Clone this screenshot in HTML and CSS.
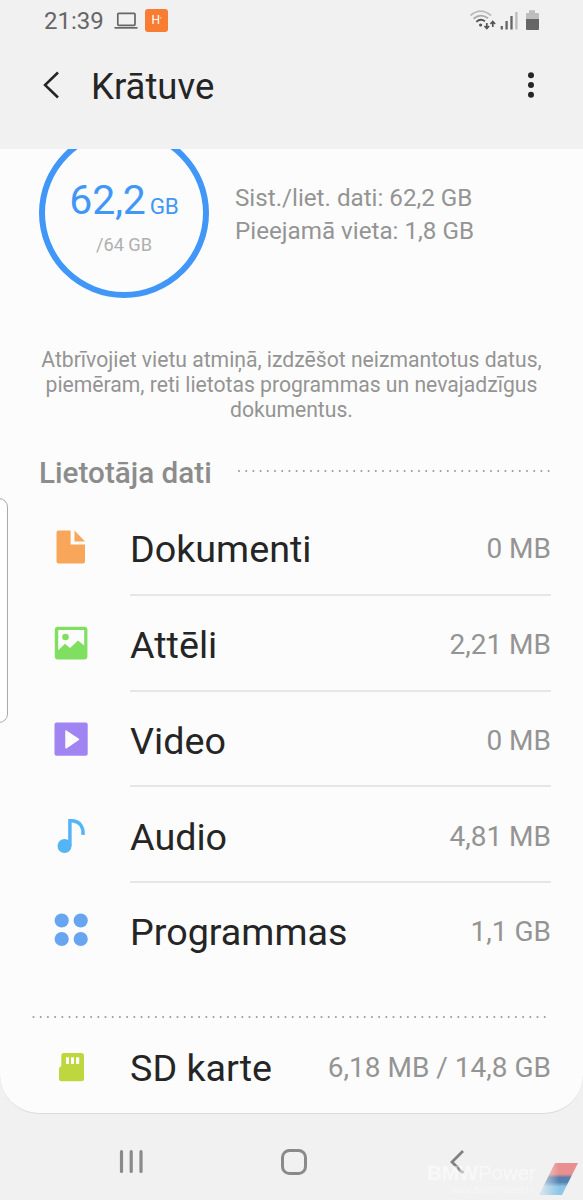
FILE: index.html
```html
<!DOCTYPE html>
<html lang="lv">
<head>
<meta charset="utf-8">
<title>Krātuve</title>
<link rel="stylesheet" href="styles.css">
</head>
<body>
<div class="screen">
  <div class="statusbar">
    <span class="time">21:39</span>
    <svg class="laptop" width="24" height="18" viewBox="0 0 24 18"><rect x="3.8" y="1.3" width="17.2" height="12" rx="1" fill="none" stroke="#666" stroke-width="1.7"/><path d="M.5 15H23.5V16.7H.5Z" fill="#666"/></svg>
    <span class="app">H<i>'</i></span>
    <svg class="signals" width="72" height="24" viewBox="468 8 72 24">
      <g fill="none" stroke-width="1.8">
        <path d="M470.5 15.5Q480.5 6.8 491 15.5" stroke="#bbb"/>
        <path d="M473.5 18.8Q480.5 12.8 488 18.3" stroke="#aaa"/>
        <path d="M476.3 21.8Q480.5 18 485 21.2" stroke="#555"/>
      </g>
      <circle cx="480.6" cy="25" r="1.6" fill="#555"/>
      <path d="M486.8 23V28M484.5 26L486.8 28.5 489.1 26M492.8 27V22M490.5 24L492.8 21.5 495.1 24" fill="none" stroke="#555" stroke-width="1.7"/>
      <path d="M501.8 29.5V26M506.6 29.5V21M511.5 29.5V16" stroke="#666" stroke-width="2.3"/>
      <path d="M516.4 29.5V12" stroke="#bbb" stroke-width="2.3"/>
      <path d="M526 19V14Q526 13 527 13H529V10.2H535V13H538Q539 13 539 14V19Z" fill="#bdbdbd"/>
      <path d="M526 19H539V29Q539 30 538 30H527Q526 30 526 29Z" fill="#666"/>
    </svg>
  </div>
  <header class="appbar">
    <svg width="18" height="28" viewBox="0 0 18 28"><path d="M16 1.5 3 14 16 26.5" fill="none" stroke="#252525" stroke-width="2.5"/></svg>
    <h1>Krātuve</h1>
    <svg class="more" width="8" height="28" viewBox="0 0 8 28" fill="#252525"><circle cx="4" cy="4.2" r="3"/><circle cx="4" cy="14" r="3"/><circle cx="4" cy="23.8" r="3"/></svg>
  </header>
  <main class="card">
    <section class="summary">
      <div class="ring">
        <div class="used">62,2<small>GB</small></div>
        <div class="total">/64 GB</div>
      </div>
      <div class="facts">Sist./liet. dati: 62,2 GB<br>Pieejamā vieta: 1,8 GB</div>
    </section>
    <p class="hint">Atbrīvojiet vietu atmiņā, izdzēšot neizmantotus datus,<br>piemēram, reti lietotas programmas un nevajadzīgus<br>dokumentus.</p>
    <div class="heading">
      <h2>Lietotāja dati</h2>
      <svg class="dots" width="316" height="4"><path d="M2 2H315" /></svg>
    </div>
    <div class="row">
      <svg class="icon" width="34" height="34" viewBox="0 0 34 34" fill="#f8a659"><path d="M4.5.5H16.6V14.5H31V31.5Q31 33.5 29 33.5H4.5Q2.5 33.5 2.5 31.5V2.5Q2.5.5 4.5.5Z"/><path d="M20.5.5 31 11.5H20.5Z"/></svg>
      <div class="line"><span>Dokumenti</span><b>0 MB</b></div>
    </div>
    <div class="row">
      <svg class="icon" width="34" height="34" viewBox="0 0 34 34"><rect x=".8" y=".8" width="32.6" height="32.6" rx="3" fill="#80df60"/><path d="M4.2 4H30.2V19.5L24 14.5 16 22 11 17.8 4.2 24.2Z" fill="#fcfcfc"/><circle cx="11.5" cy="11" r="3.3" fill="#80df60"/></svg>
      <div class="line"><span>Attēli</span><b>2,21 MB</b></div>
    </div>
    <div class="row">
      <svg class="icon" width="34" height="34" viewBox="0 0 34 34"><rect x=".5" y=".5" width="33.2" height="33.2" rx="2" fill="#a084f2"/><path d="M12 9 24.5 17.3 12 25.8Z" fill="#fcfcfc" stroke="#fcfcfc" stroke-width="1.5" stroke-linejoin="round"/></svg>
      <div class="line"><span>Video</span><b>0 MB</b></div>
    </div>
    <div class="row">
      <svg class="icon" width="34" height="36" viewBox="0 0 34 36"><circle cx="10.5" cy="28" r="7" fill="#54b4f5"/><path d="M15.9 28V2.8H18.5C26 3.6 29.6 9 29 16.8" fill="none" stroke="#54b4f5" stroke-width="3.5"/></svg>
      <div class="line"><span>Audio</span><b>4,81 MB</b></div>
    </div>
    <div class="row">
      <svg class="icon" width="34" height="34" viewBox="0 0 34 34" fill="#68a5f0"><circle cx="7.7" cy="7.5" r="7.1"/><circle cx="26.7" cy="7.5" r="7.1"/><circle cx="7.7" cy="26" r="7.1"/><circle cx="26.7" cy="26" r="7.1"/></svg>
      <div class="line last"><span>Programmas</span><b>1,1 GB</b></div>
    </div>
    <svg class="dots wide" width="520" height="4"><path d="M2.5 2H519"/></svg>
    <div class="row sd">
      <svg class="icon" width="34" height="34" viewBox="0 0 34 34"><path d="M9.5 3H27.5Q30 3 30 5.5V29Q30 31.3 27.5 31.3H7.5Q5 31.3 5 29V19Q5 17.3 7.3 16V5.5Q7.3 3 9.5 3Z" fill="#bed73e"/><path d="M12 7.3H15V14H12ZM17 7.3H20V14H17ZM22 7.3H25.2V14H22Z" fill="#fcfcfc"/></svg>
      <div class="line last"><span>SD karte</span><b>6,18 MB / 14,8 GB</b></div>
    </div>
  </main>
  <nav class="navbar">
    <svg width="24" height="26" viewBox="0 0 24 26"><path d="M2.5 2.5V22.5M12.2 2.5V22.5M22 2.5V22.5" stroke="#8a8a8a" stroke-width="3.2" stroke-linecap="round"/></svg>
    <svg width="28" height="28" viewBox="0 0 28 28"><rect x="2.5" y="2.5" width="23" height="23" rx="7" fill="none" stroke="#8a8a8a" stroke-width="3"/></svg>
    <svg width="16" height="26" viewBox="0 0 16 26"><path d="M14 2 3 13 14 24" fill="none" stroke="#808080" stroke-width="2.8"/></svg>
  </nav>
  <div class="edge-handle"></div>
  <div class="watermark">
    <div class="brand"><b>BMW</b>Power</div>
    <div class="site">www.BMWPower.lv</div>
  </div>
  <svg class="flag" width="42" height="34" viewBox="0 0 42 34">
    <defs>
      <linearGradient id="fade" x1="0" x2="1"><stop offset="0" stop-color="#fff" stop-opacity=".15"/><stop offset=".5" stop-color="#fff"/></linearGradient>
      <linearGradient id="stripes" x1="0" y1="0" x2="0" y2="1"><stop offset=".35" stop-color="#e88f8f"/><stop offset=".45" stop-color="#5a7dab"/><stop offset=".6" stop-color="#5585b3"/><stop offset=".74" stop-color="#8dc6e6"/></linearGradient>
      <mask id="m"><rect width="42" height="34" fill="url(#fade)"/></mask>
    </defs>
    <path mask="url(#m)" d="M17 1H40L24 33H1Z" fill="url(#stripes)"/>
  </svg>
</div>
</body>
</html>
```

FILE: styles.css
```css
* { box-sizing: border-box; }
body { margin: 0; background: #f1f1f1; font-family: Roboto, sans-serif; }
svg { display: block; flex: none; }
.screen { position: relative; width: 583px; height: 1200px; overflow: hidden; display: flex; flex-direction: column; }
.statusbar { height: 42px; flex: none; display: flex; align-items: center; padding: 0 43px 0 44px; }
.time { font-size: 24px; line-height: 42px; color: #666; width: 70px; }
.app { margin-left: 7px; margin-top: -2px; width: 23px; height: 23px; border-radius: 3px; background: #f87c31; color: #fff; font-size: 12px; line-height: 23px; text-align: center; }
.app i { font-size: 7px; font-style: normal; vertical-align: 2px; }
.signals { margin-left: auto; margin-top: -2px; }
.appbar { height: 107px; flex: none; display: flex; align-items: center; padding: 0 48px 22px 42px; }
.appbar h1 { margin: 5px 0 0 31px; font-size: 36.5px; font-weight: 400; line-height: 44px; color: #252525; }
.more { margin-left: auto; }
.card { height: 965px; flex: none; overflow: hidden; background: #fcfcfc; border-bottom: 1px solid #dcdcdc; border-radius: 0 0 39px 39px; }
.summary { height: 149px; display: flex; padding-left: 39px; }
.ring { width: 170px; height: 170px; margin-top: -21px; border: 6.5px solid #4197f8; border-radius: 50%; text-align: center; padding-top: 42px; flex: none; }
.used { font-size: 41px; line-height: 48px; color: #4197f8; white-space: nowrap; letter-spacing: -.2px; }
.used small { font-size: 22.5px; margin-left: 4px; }
.total { margin-top: 4px; font-size: 18.2px; line-height: 22px; color: #b0b0b0; }
.facts { margin: 33px 0 0 26px; font-size: 24.2px; line-height: 33px; color: #949494; white-space: nowrap; }
.hint { margin: 49px 0 0; font-size: 21.15px; line-height: 25px; color: #949494; text-align: center; white-space: nowrap; }
.heading { display: flex; align-items: center; padding-left: 39px; margin-top: 33px; height: 36px; }
.heading h2 { margin: 0; width: 198px; font-size: 29.7px; line-height: 36px; font-weight: 500; color: #8c8c8c; white-space: nowrap; }
.dots path { fill: none; stroke: #999; stroke-width: 2; stroke-linecap: round; stroke-dasharray: 0 7.2; }
.heading .dots { margin-bottom: 4px; }
.row { height: 95.75px; display: flex; padding: 0 32px 0 54px; }
.heading + .row { margin-top: 9px; }
.icon { margin-top: 30.4px; }
.line { flex: 1; margin-left: 42px; display: flex; justify-content: space-between; align-items: center; border-bottom: 2px solid #e6e6e6; color: #252525; font-size: 37.7px; padding-top: 5px; white-space: nowrap; }
.line.last { border-color: transparent; }
.line b { font-weight: 400; font-size: 28px; color: #949494; margin-top: -1px; }
.wide { margin: 36.5px 0 0 31px; }
.sd { height: 95px; }
.navbar { flex: 1; display: flex; align-items: center; padding: 10px 0 0 119px; }
.navbar svg + svg { margin-left: 137px; }
.navbar svg + svg + svg { margin-left: 141px; }
.edge-handle { position: absolute; left: -10px; top: 498px; width: 18px; height: 225px; border: 1px solid #aaa; border-radius: 9px; background: #fff; }
.watermark { position: absolute; left: 427px; top: 1162px; width: 112px; color: rgba(255,255,255,.55); font-family: "Liberation Sans", Arial, sans-serif; }
.brand { font-size: 20.4px; line-height: 23px; white-space: nowrap; }
.site { font-size: 9.5px; line-height: 10px; text-align: right; padding-right: 6px; opacity: .6; }
.flag { position: absolute; left: 538px; top: 1162px; }
```
